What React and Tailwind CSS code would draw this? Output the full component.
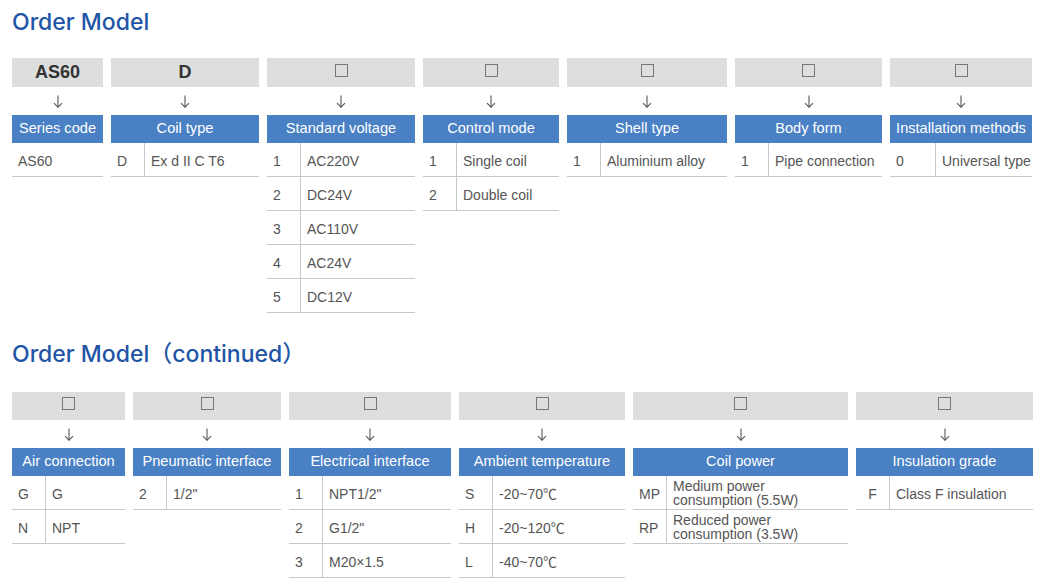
const font = { fontFamily: '"Liberation Sans", "Noto Sans CJK SC", sans-serif' };

const row1 = [
  { w: 'w-[91px]', top: 'AS60', title: 'Series code', rows: [['AS60']] },
  { w: 'w-[148px]', top: 'D', title: 'Coil type', rows: [['D', 'Ex d II C T6']] },
  {
    w: 'w-[148px]',
    title: 'Standard voltage',
    rows: [['1', 'AC220V'], ['2', 'DC24V'], ['3', 'AC110V'], ['4', 'AC24V'], ['5', 'DC12V']],
  },
  { w: 'w-[136px]', title: 'Control mode', rows: [['1', 'Single coil'], ['2', 'Double coil']] },
  { w: 'w-[160px]', title: 'Shell type', rows: [['1', 'Aluminium alloy']] },
  { w: 'w-[147px]', title: 'Body form', rows: [['1', 'Pipe connection']] },
  { w: 'w-[142px]', title: 'Installation methods', code: 'w-[46px]', rows: [['0', 'Universal type']] },
];

const row2 = [
  { w: 'w-[113px]', title: 'Air connection', rows: [['G', 'G'], ['N', 'NPT']] },
  { w: 'w-[148px]', title: 'Pneumatic interface', rows: [['2', '1/2"']] },
  { w: 'w-[162px]', title: 'Electrical interface', rows: [['1', 'NPT1/2"'], ['2', 'G1/2"'], ['3', 'M20×1.5']] },
  {
    w: 'w-[166px]',
    title: 'Ambient temperature',
    rows: [['S', '-20~70℃'], ['H', '-20~120℃'], ['L', '-40~70℃']],
  },
  {
    w: 'w-[215px]',
    title: 'Coil power',
    rows: [
      ['MP', 'Medium power consumption (5.5W)'],
      ['RP', 'Reduced power consumption (3.5W)'],
    ],
    wrap: true,
  },
  { w: 'w-[177px]', title: 'Insulation grade', center: true, rows: [['F', 'Class F insulation']] },
];

function Square() {
  return <span className="block w-[13px] h-[13px] border-[1.5px] border-[#777] -mt-[5px]" />;
}

function Arrow() {
  return (
    <svg width="10" height="13" viewBox="0 0 10 13" fill="none" stroke="#555" strokeWidth="1.1">
      <path d="M5 0.5V12.2" />
      <path d="M1 8.2L5 12.2L9 8.2" />
    </svg>
  );
}

function Column({ col, boxH }) {
  return (
    <div className={`${col.w} flex flex-col`}>
      <div className={`${boxH} bg-[#dddede] flex items-center justify-center`}>
        {col.top ? (
          <span className="text-[18px] font-bold text-[#333]">{col.top}</span>
        ) : (
          <Square />
        )}
      </div>
      <div className="h-[28px] flex items-center justify-center">
        <Arrow />
      </div>
      <div className="h-[28px] bg-[#4a80c4] flex items-center justify-center text-white text-[14.6px] whitespace-nowrap">
        {col.title}
      </div>
      {col.rows.map((r, i) => (
        <div key={i} className="h-[34px] flex border-b border-[#c8c8c8] text-[14px] text-[#555]">
          {r.length === 1 ? (
            <div className="flex items-center pl-[6px] pt-[3px]">{r[0]}</div>
          ) : (
            <>
              <div
                className={`${col.code || 'w-[34px]'} shrink-0 flex items-center pt-[3px] border-r border-[#c8c8c8] ${
                  col.center ? 'justify-center' : 'pl-[6px]'
                } ${r[0].length > 1 ? 'pl-[5px]' : ''}`}
              >
                {r[0]}
              </div>
              <div
                className={`flex items-center pl-[6px] ${
                  col.wrap ? 'leading-[14px] pr-[40px] pt-[1px]' : 'whitespace-nowrap pt-[3px]'
                }`}
              >
                {r[1]}
              </div>
            </>
          )}
        </div>
      ))}
    </div>
  );
}

function Title({ children, className }) {
  return (
    <h2
      className={`h-[30px] leading-[30px] text-[23px] font-medium text-[#1f55a6] ${className}`}
      style={{ fontFamily: 'Inter, "Noto Sans CJK SC", sans-serif' }}
    >
      {children}
    </h2>
  );
}

export default function App() {
  return (
    <div className="w-[1042px] h-[585px] bg-white pl-[12px] overflow-hidden" style={font}>
      <Title className="mt-[7px]">Order Model</Title>
      <div className="flex gap-[8px] mt-[21px]">
        {row1.map((c, i) => (
          <Column key={i} col={c} boxH="h-[29px]" />
        ))}
      </div>
      <Title className="mt-[26px]">Order Model（continued）</Title>
      <div className="flex gap-[8px] mt-[23px] items-start">
        {row2.map((c, i) => (
          <Column key={i} col={c} boxH="h-[28px]" />
        ))}
      </div>
    </div>
  );
}
